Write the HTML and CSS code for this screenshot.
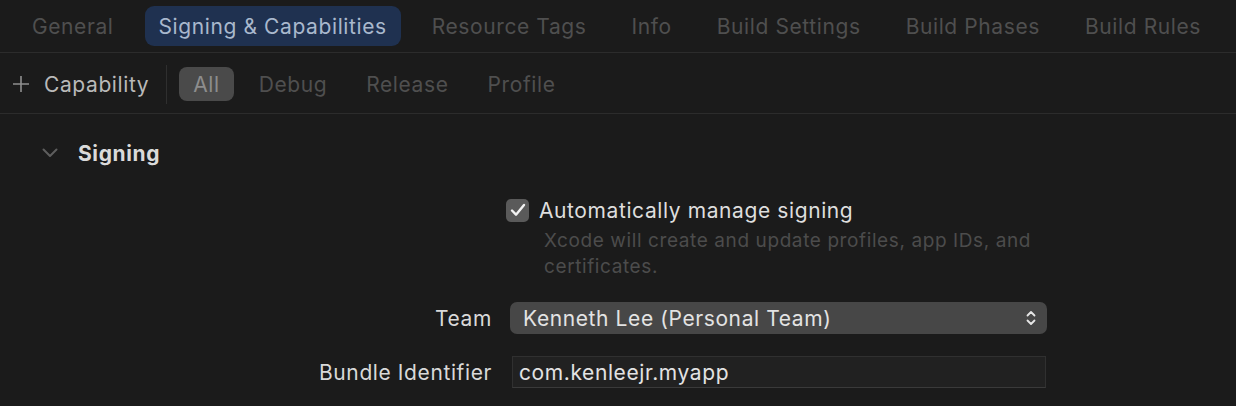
FILE: index.html
```html
<!DOCTYPE html>
<html>
<head>
<meta charset="utf-8">
<link rel="stylesheet" href="styles.css">
</head>
<body>
<div class="tabbar">
  <div class="tab">General</div>
  <div class="tab active">Signing &amp; Capabilities</div>
  <div class="tab">Resource Tags</div>
  <div class="tab">Info</div>
  <div class="tab">Build Settings</div>
  <div class="tab">Build Phases</div>
  <div class="tab">Build Rules</div>
</div>
<div class="toolbar">
  <div class="add">
    <svg class="plus" width="18" height="18" viewBox="0 0 18 18"><path d="M9 1v16M1 9h16" stroke="#8f8f8f" stroke-width="1.6" fill="none"/></svg>
    <span>Capability</span>
  </div>
  <div class="divider"></div>
  <div class="filters">
    <div class="filter on">All</div>
    <div class="filter">Debug</div>
    <div class="filter">Release</div>
    <div class="filter">Profile</div>
  </div>
</div>
<div class="section">
  <div class="section-head">
    <svg class="chev" width="16" height="10" viewBox="0 0 16 10"><path d="M1.5 1.5L8 8l6.5-6.5" stroke="#5e5e5e" stroke-width="2" fill="none" stroke-linecap="round" stroke-linejoin="round"/></svg>
    <span class="title">Signing</span>
  </div>
  <div class="form">
    <div class="row check-row">
      <div class="label"></div>
      <div class="control">
        <div class="checkline">
          <span class="checkbox"><svg width="16" height="14" viewBox="0 0 16 14"><path d="M2 7.5l4 4.2L14 2" stroke="#f2f2f2" stroke-width="2.4" fill="none" stroke-linecap="round" stroke-linejoin="round"/></svg></span>
          <span class="checktext">Automatically manage signing</span>
        </div>
        <div class="desc">Xcode will create and update profiles, app IDs, and certificates.</div>
      </div>
    </div>
    <div class="row team-row">
      <div class="label">Team</div>
      <div class="control">
        <div class="popup">
          <span>Kenneth Lee (Personal Team)</span>
          <svg width="10" height="16" viewBox="0 0 10 16"><path d="M1.5 5.5L5 2l3.5 3.5M1.5 10.5L5 14l3.5-3.5" stroke="#e6e6e6" stroke-width="1.8" fill="none" stroke-linecap="round" stroke-linejoin="round"/></svg>
        </div>
      </div>
    </div>
    <div class="row bundle-row">
      <div class="label">Bundle Identifier</div>
      <div class="control">
        <div class="field">com.kenleejr.myapp</div>
      </div>
    </div>
  </div>
</div>
</body>
</html>
```

FILE: styles.css
```css
* { box-sizing: border-box; }
html, body {
  margin: 0;
  padding: 0;
  background: #1b1b1b;
  font-family: "Inter", "Noto Sans", sans-serif;
  letter-spacing: 0.6px;
  width: 1236px;
  height: 406px;
  overflow: hidden;
}
.tabbar {
  height: 53px;
  display: flex;
  align-items: center;
  padding-left: 18px;
  gap: 17px;
  border-bottom: 1px solid #2c2c2c;
}
.tab {
  height: 40px;
  display: flex;
  align-items: center;
  padding: 0 14px;
  border-radius: 9px;
  font-size: 21px;
  color: #4f4f4f;
  white-space: nowrap;
}
.tab.active {
  background: #1f3150;
  color: #a9b8cd;
}
.toolbar {
  height: 61px;
  display: flex;
  align-items: center;
  padding-top: 2px;
  border-bottom: 1px solid #2c2c2c;
}
.add {
  display: flex;
  align-items: center;
  padding-left: 12px;
  gap: 14px;
  font-size: 21px;
  color: #b9b9b9;
}
.plus { display: block; }
.divider {
  width: 1px;
  height: 39px;
  background: #2f2f2f;
  margin-left: 17px;
}
.filters {
  display: flex;
  align-items: center;
  margin-left: 12px;
  gap: 11px;
}
.filter {
  height: 34px;
  display: flex;
  align-items: center;
  padding: 0 14px;
  border-radius: 8px;
  font-size: 21px;
  color: #4f4f4f;
}
.filter.on {
  background: #4a4a4a;
  color: #8d8d8d;
}
.section {
  padding-top: 26px;
}
.section-head {
  display: flex;
  align-items: center;
  height: 26px;
  padding-left: 42px;
  gap: 20px;
}
.chev { display: block; }
.title {
  font-size: 21px;
  font-weight: 700;
  color: #dadada;
}
.form {
  margin-top: 31px;
  display: flex;
  flex-direction: column;
}
.row {
  display: flex;
}
.label {
  width: 492px;
  text-align: right;
  font-size: 21px;
  color: #d9d9d9;
  flex: none;
}
.control {
  width: 556px;
  padding-left: 18px;
}
.check-row .control { padding-left: 14px; }
.checkline {
  display: flex;
  align-items: center;
  gap: 10px;
  height: 26px;
}
.checkbox {
  width: 23px;
  height: 23px;
  border-radius: 5px;
  background: #5a5a5a;
  display: flex;
  align-items: center;
  justify-content: center;
}
.checktext {
  font-size: 21px;
  color: #dedede;
}
.desc {
  margin-top: 5px;
  padding-left: 38px;
  padding-right: 6px;
  font-size: 19px;
  line-height: 26px;
  color: #4c4c4c;
}
.team-row {
  margin-top: 22px;
  align-items: center;
  height: 32px;
}
.popup {
  height: 32px;
  background: #474747;
  border-radius: 7px;
  display: flex;
  align-items: center;
  justify-content: space-between;
  padding: 0 11px 0 13px;
  font-size: 21px;
  color: #e3e3e3;
  width: 537px;
}
.popup svg { display: block; }
.bundle-row {
  margin-top: 22px;
  align-items: center;
  height: 32px;
}
.bundle-row .control { padding-left: 20px; }
.field {
  height: 32px;
  width: 534px;
  background: #212121;
  border: 1px solid #303030;
  border-bottom-color: #3a3a3a;
  display: flex;
  align-items: center;
  padding-left: 6px;
  font-size: 21px;
  color: #e3e3e3;
}
```
